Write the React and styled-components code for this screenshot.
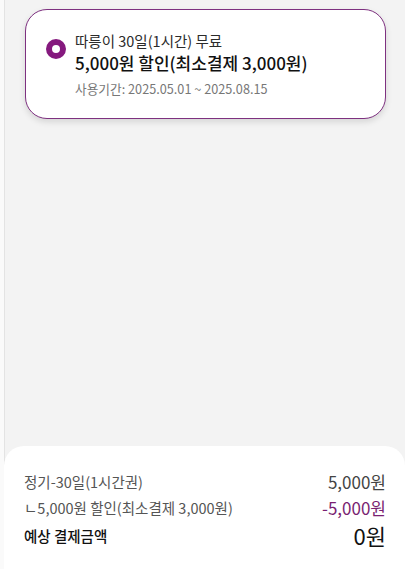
import React from 'react'
import styled, { createGlobalStyle } from 'styled-components'

const GlobalStyle = createGlobalStyle`
  html, body {
    margin: 0;
    padding: 0;
    background: #f3f3f3;
  }
  body {
    font-family: "Noto Sans CJK KR", "Noto Sans", sans-serif;
    -webkit-font-smoothing: antialiased;
  }
`

const Page = styled.div`
  display: flex;
  height: 569px;
  overflow: hidden;
`

const SideStrip = styled.div`
  width: 4px;
  flex-shrink: 0;
  background: #fafafa;
  border-right: 1px solid #e3e3e3;
`

const Main = styled.div`
  flex: 1;
  display: flex;
  flex-direction: column;
  justify-content: space-between;
  background: #f3f3f3;
`

const CouponCard = styled.div`
  margin: 9px 19px 0 20px;
  height: 110px;
  box-sizing: border-box;
  display: flex;
  align-items: flex-start;
  gap: 9px;
  padding: 21px 20px 0 20px;
  background: #fff;
  border: 1.5px solid #7e3180;
  border-radius: 22px;
  box-shadow: 0 3px 6px rgba(0, 0, 0, 0.12);
`

const Radio = styled.span`
  width: 20px;
  height: 20px;
  margin-top: 8px;
  flex-shrink: 0;
  box-sizing: border-box;
  border-radius: 50%;
  border: 6.5px solid #85197e;
  background: #fff;
`

const CouponText = styled.div`
  display: flex;
  flex-direction: column;
`

const CouponTitle = styled.div`
  font-size: 14.5px;
  line-height: 20px;
  color: #2b2b2b;
`

const CouponAmount = styled.div`
  font-size: 17px;
  line-height: 24px;
  font-weight: 500;
  color: #111;
`

const CouponPeriod = styled.div`
  margin-top: 5px;
  font-size: 12.7px;
  line-height: 18px;
  color: #777;
`

const Summary = styled.div`
  height: 123px;
  box-sizing: border-box;
  margin-left: -1px;
  padding: 22px 19px 0 20px;
  background: #fff;
  border-radius: 20px 20px 0 0;
  display: flex;
  flex-direction: column;
`

const Row = styled.div`
  display: flex;
  justify-content: space-between;
  align-items: center;
  height: ${p => p.$h || 26}px;
`

const Label = styled.span`
  font-size: 14.5px;
  color: ${p => (p.$strong ? '#111' : '#555')};
  font-weight: ${p => (p.$strong ? 500 : 400)};
`

const Amount = styled.span`
  font-size: ${p => p.$size || 17}px;
  color: ${p => p.$color || '#444'};
  font-weight: ${p => p.$weight || 400};
`

export default function App() {
  return (
    <>
      <GlobalStyle />
      <Page>
        <SideStrip />
        <Main>
          <CouponCard>
            <Radio />
            <CouponText>
              <CouponTitle>따릉이 30일(1시간) 무료</CouponTitle>
              <CouponAmount>5,000원 할인(최소결제 3,000원)</CouponAmount>
              <CouponPeriod>사용기간: 2025.05.01 ~ 2025.08.15</CouponPeriod>
            </CouponText>
          </CouponCard>
          <Summary>
            <Row>
              <Label>정기-30일(1시간권)</Label>
              <Amount>5,000원</Amount>
            </Row>
            <Row>
              <Label>ㄴ5,000원 할인(최소결제 3,000원)</Label>
              <Amount $color="#7a1f72">-5,000원</Amount>
            </Row>
            <Row $h={30}>
              <Label $strong>예상 결제금액</Label>
              <Amount $size={22} $color="#111">0원</Amount>
            </Row>
          </Summary>
        </Main>
      </Page>
    </>
  )
}
